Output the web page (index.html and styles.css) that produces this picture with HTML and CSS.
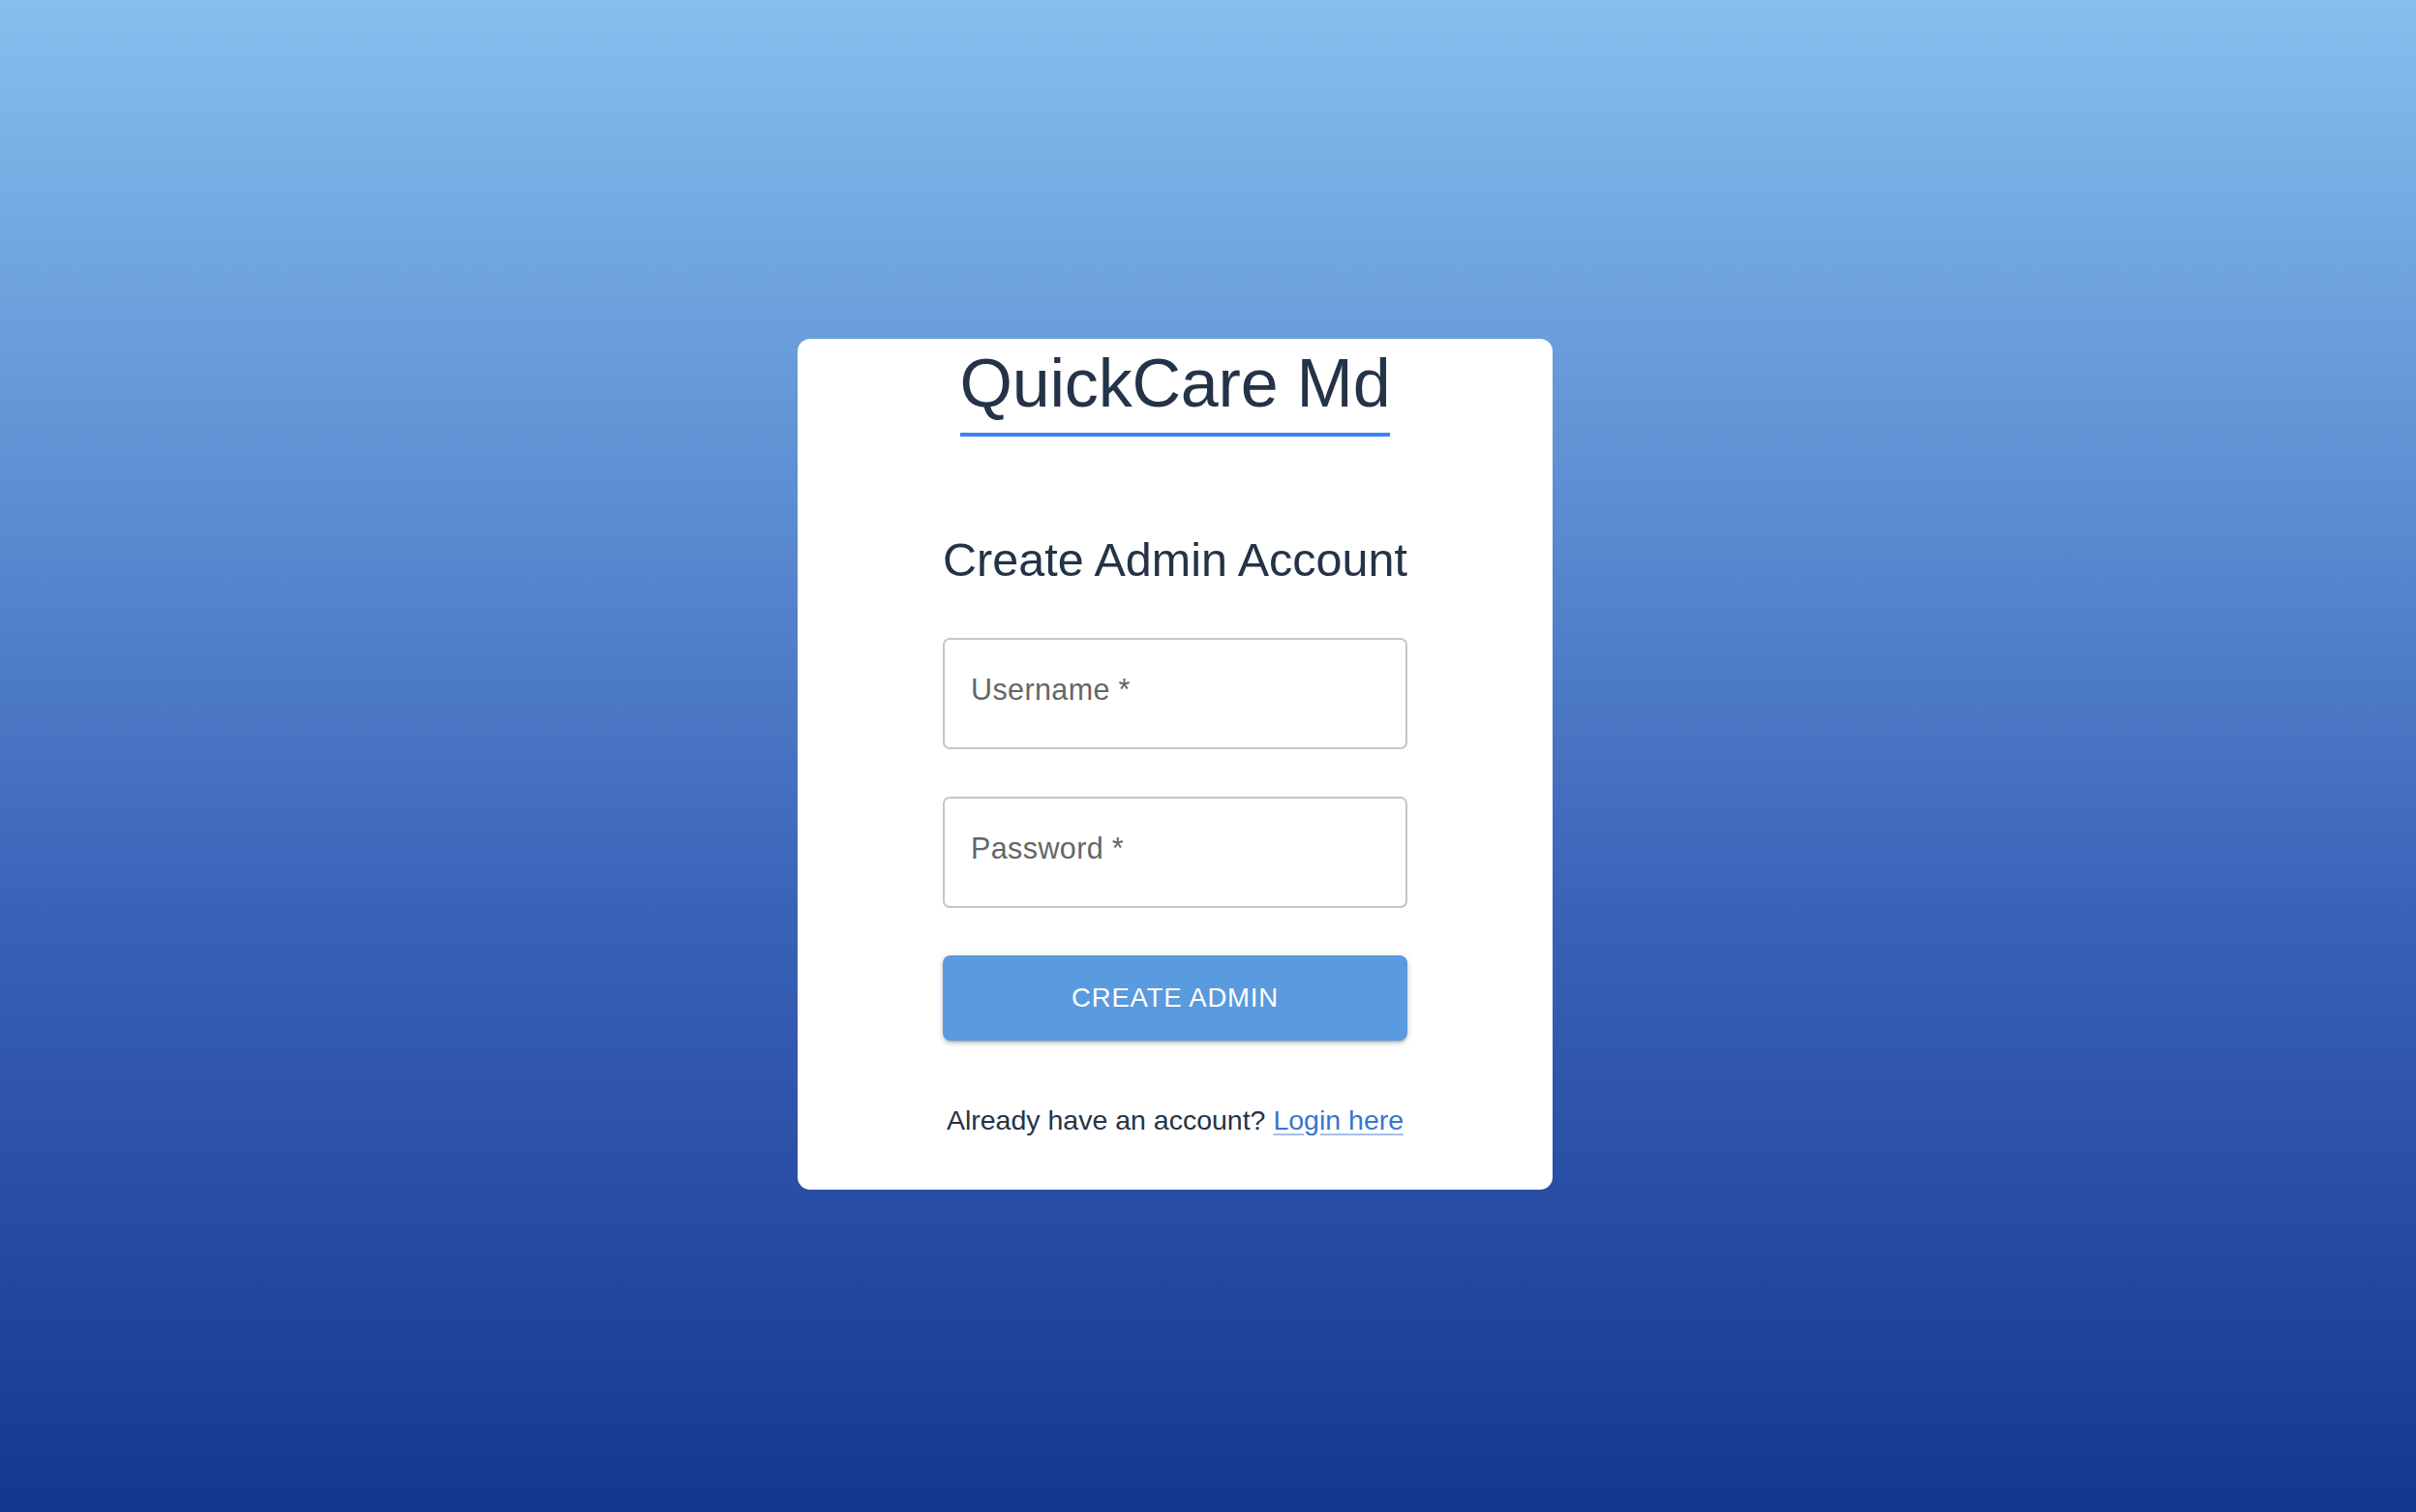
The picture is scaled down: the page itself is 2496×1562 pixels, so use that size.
FILE: index.html
```html
<!DOCTYPE html>
<html lang="en">
<head>
<meta charset="utf-8">
<title>QuickCare Md - Create Admin Account</title>
<link rel="stylesheet" href="styles.css">
</head>
<body>
<main class="page">
  <section class="card">
    <h1 class="brand">QuickCare Md</h1>
    <h2 class="heading">Create Admin Account</h2>
    <form class="form">
      <label class="field">
        <span class="field-label">Username<span class="req">&thinsp;*</span></span>
      </label>
      <label class="field">
        <span class="field-label">Password<span class="req">&thinsp;*</span></span>
      </label>
      <button type="button" class="btn">CREATE ADMIN</button>
    </form>
    <p class="footer">Already have an account? <a href="#" class="link">Login here</a></p>
  </section>
</main>
</body>
</html>
```

FILE: styles.css
```css
* { box-sizing: border-box; }
html, body { margin: 0; padding: 0; }
body {
  font-family: "Liberation Sans", Arial, Helvetica, sans-serif;
  color: #243347;
}
.page {
  min-height: 100vh;
  display: flex;
  align-items: center;
  justify-content: center;
  padding: 17px 68px 0 0;
  background: linear-gradient(to bottom, #85c0ee 0%, #5a8ad0 35%, #3a63b8 60%, #15368f 100%);
}
.card {
  width: 780px;
  background: #ffffff;
  border-radius: 13px;
  padding: 6px 0 55px;
  display: flex;
  flex-direction: column;
  align-items: center;
}
.brand {
  margin: 0;
  font-size: 70px;
  line-height: 80px;
  font-weight: 400;
  color: #243347;
  padding-bottom: 11px;
  border-bottom: 4px solid #3b82f6;
  letter-spacing: -0.2px;
}
.heading {
  margin: 99px 0 53px;
  font-size: 48.5px;
  line-height: 56px;
  font-weight: 400;
  color: #243347;
}
.form {
  width: 480px;
  display: flex;
  flex-direction: column;
  gap: 49px;
}
.field {
  display: block;
  height: 115px;
  border: 2px solid #c6c6c6;
  border-radius: 7px;
  padding: 33px 0 0 27px;
}
.field-label {
  font-size: 30.5px;
  line-height: 36px;
  color: #666666;
  letter-spacing: 0.4px;
}
.req { color: #666666; margin-left: 2px; }
.btn {
  height: 88px;
  border: none;
  border-radius: 8px;
  background: #5a9ade;
  color: #ffffff;
  font-family: "Liberation Sans", Arial, Helvetica, sans-serif;
  font-size: 27.5px;
  letter-spacing: 0.8px;
  box-shadow: 0 3px 2px -2px rgba(0,0,0,0.2), 0 3px 4px 0 rgba(0,0,0,0.14), 0 1px 9px 0 rgba(0,0,0,0.12);
  cursor: pointer;
}
.footer {
  margin: 65px 0 0;
  font-size: 28.5px;
  line-height: 34px;
  color: #243347;
}
.link {
  color: #3a74d0;
  text-decoration: underline;
  text-decoration-color: rgba(58, 116, 208, 0.45);
  text-underline-offset: 4px;
}
```
